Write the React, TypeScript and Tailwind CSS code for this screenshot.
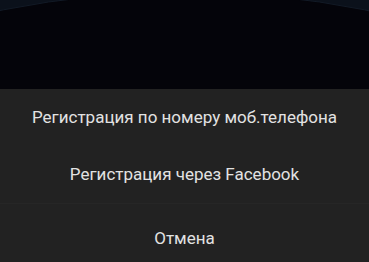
export default function App() {
  const items = ["Регистрация по номеру моб.телефона", "Регистрация через Facebook"];
  return (
    <div className="w-[369px] h-[262px] overflow-hidden bg-[#222222] flex flex-col font-['Roboto',sans-serif]">
      {/* тёмный фон сверху с дугой */}
      <div className="h-[89px] bg-[#04040a] relative shrink-0">
        <svg className="absolute inset-0" width="369" height="89" viewBox="0 0 369 89">
          <rect width="369" height="89" fill="#0b111b" />
          <circle cx="184" cy="916" r="924" fill="#04040a" stroke="#121a26" strokeWidth="1" />
        </svg>
      </div>
      <div className="flex flex-col">
        {items.map((t) => (
          <div key={t} className="h-[57px] flex items-center justify-center text-[17px] text-[#e2e2e2]">
            {t}
          </div>
        ))}
        <div className="h-px bg-[#262626]" />
        <div className="h-[70px] flex items-center justify-center text-[17px] text-[#e2e2e2]">
          Отмена
        </div>
      </div>
    </div>
  );
}
